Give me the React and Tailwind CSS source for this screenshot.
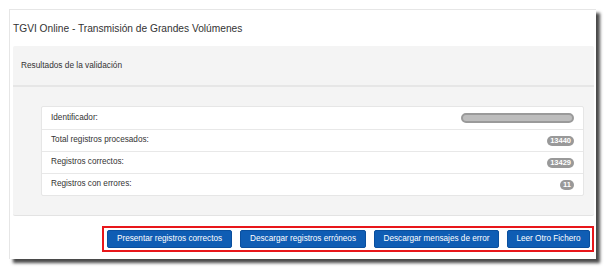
import React from 'react';

const rows = [
  { label: 'Identificador:', value: null },
  { label: 'Total registros procesados:', value: '13440' },
  { label: 'Registros correctos:', value: '13429' },
  { label: 'Registros con errores:', value: '11' },
];

const actions = [
  { text: 'Presentar registros correctos', w: 'w-[125px]' },
  { text: 'Descargar registros erróneos', w: 'w-[126px]' },
  { text: 'Descargar mensajes de error', w: 'w-[125px]' },
  { text: 'Leer Otro Fichero', w: 'w-[83px]' },
];

export default function App() {
  return (
    <div className="w-[608px] h-[271px] bg-white pt-[9px] pl-[9px] font-['Liberation_Sans',Arial,sans-serif]">
      <div className="w-[587px] h-[250px] bg-white border-t border-l border-[#e6e6e6] shadow-[4px_4px_3px_#4a4a4a] flex flex-col">
        <div className="h-[36px] pl-[3px] flex items-center text-[10.2px] text-[#333] pt-[2px]">
          TGVI Online - Transmisión de Grandes Volúmenes
        </div>

        <div className="ml-[3px] mr-[2px] bg-[#f4f4f4] border-b border-[#e3e3e3] rounded-[2px]">
          <div className="h-[41px] pl-[8px] flex items-center text-[8.3px] text-[#333] border-b-2 border-[#e6e6e6]">
            Resultados de la validación
          </div>
          <div className="pt-[19px] pb-[19px] pl-[28px] pr-[10px]">
            <div className="bg-white border border-[#e6e6e6] rounded-[2px]">
              {rows.map((r, i) => (
                <div
                  key={r.label}
                  className={`h-[22px] flex items-center justify-between pl-[9px] pr-[9px] text-[8.2px] text-[#333] ${i > 0 ? 'border-t border-[#e8e8e8]' : ''}`}
                >
                  <span>{r.label}</span>
                  {r.value ? (
                    <span className="h-[10px] px-[3px] rounded-full bg-[#999] text-white text-[7.5px] font-bold leading-[10px] flex items-center">
                      {r.value}
                    </span>
                  ) : (
                    <span className="w-[113px] h-[10px] rounded-full bg-[#bdbdbd] border-2 border-[#9a9a9a] blur-[0.4px]" />
                  )}
                </div>
              ))}
            </div>
          </div>
        </div>

        <div className="flex justify-end pr-[2px] pt-[10px]">
          <div className="border-2 border-[#e8161a] p-[2px] pl-[3px] flex gap-[8px]">
            {actions.map((a) => (
              <button
                key={a.text}
                className={`${a.w} h-[18px] bg-[#0f5db4] border border-[#0a4f9e] rounded-[2px] text-white text-[8.2px] flex items-center justify-center`}
              >
                {a.text}
              </button>
            ))}
          </div>
        </div>
      </div>
    </div>
  );
}
